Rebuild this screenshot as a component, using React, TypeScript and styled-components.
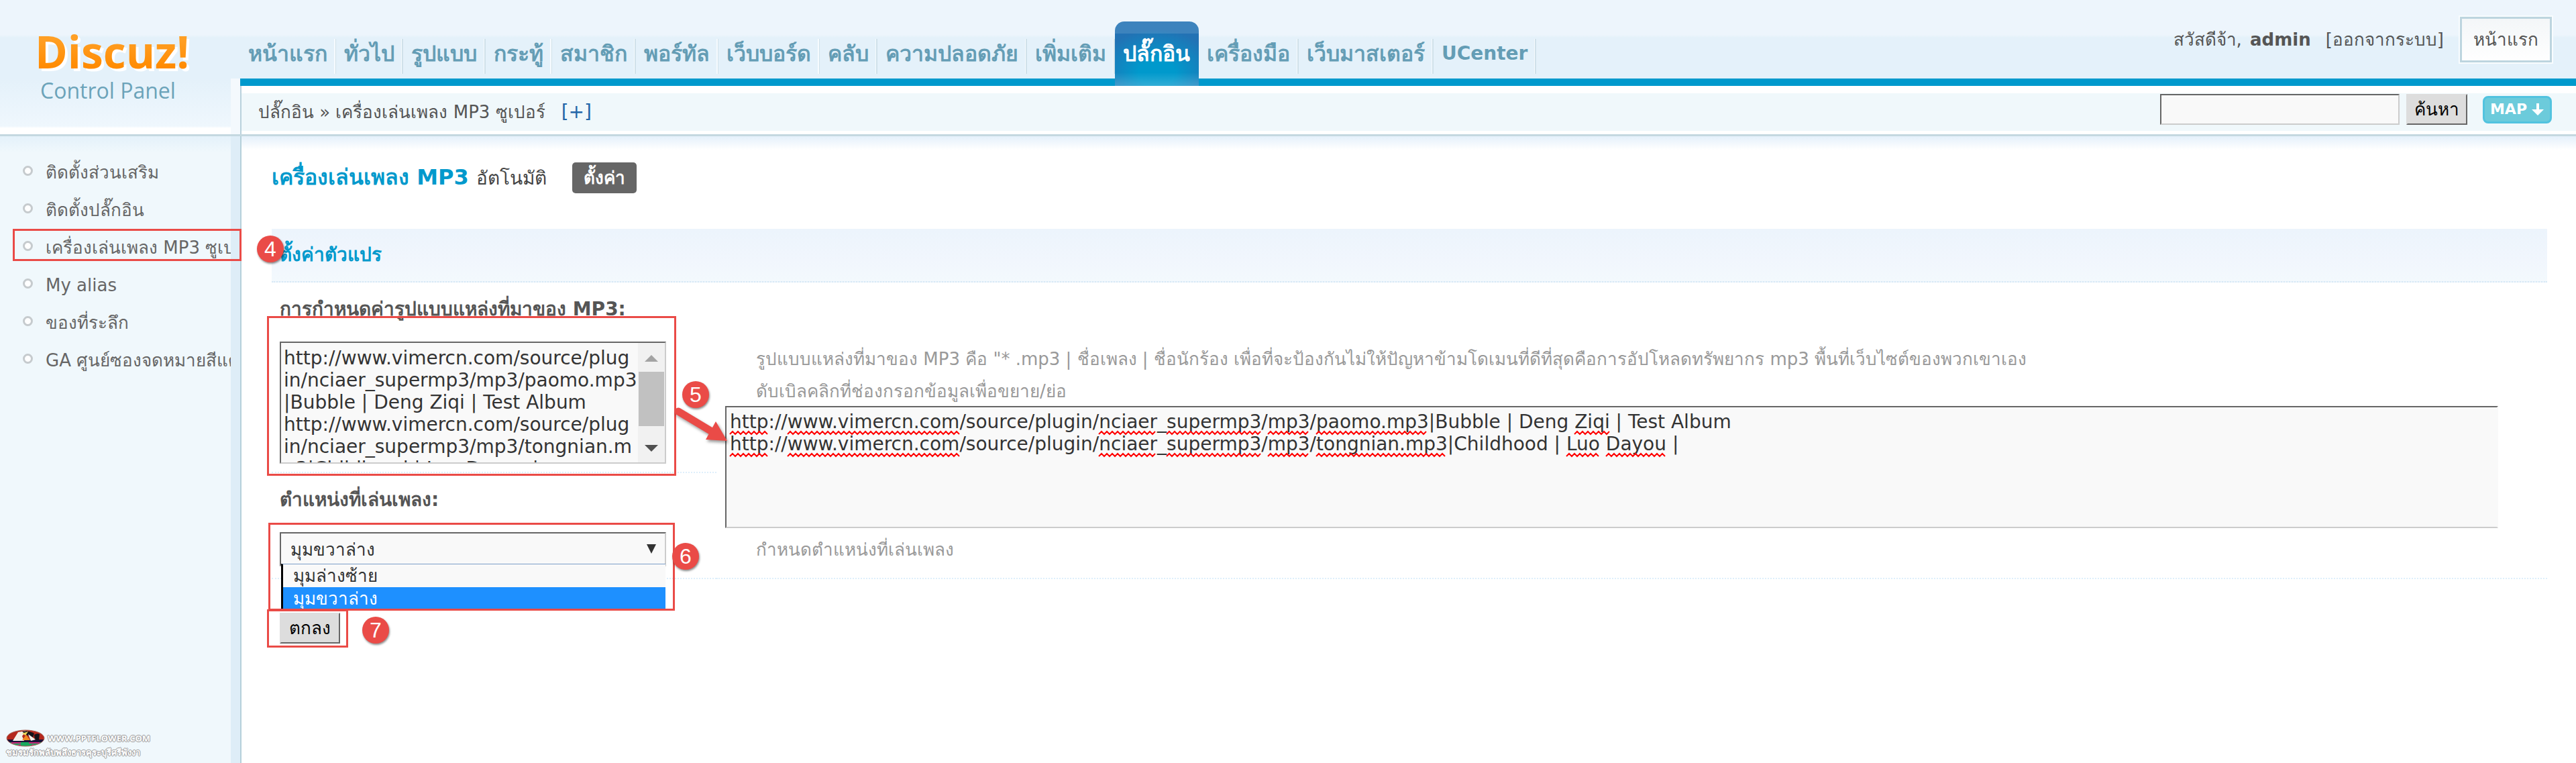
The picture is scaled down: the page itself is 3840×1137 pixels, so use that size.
import React, { useLayoutEffect, useState } from "react";
import styled, { createGlobalStyle, css } from "styled-components";

const SANS = `"DejaVu Sans", sans-serif`;
const MARK = "#ea4b47";

const GlobalStyle = createGlobalStyle`
  *, *::before, *::after { box-sizing: border-box; }
  body { margin: 0; background: #fff; color: #555; font: 26px/48px ${SANS}; }
  ul { list-style: none; margin: 0; padding: 0; }
  a { color: inherit; text-decoration: none; }
  button, input, select, textarea { font: inherit; margin: 0; border-radius: 0; }
`;

const Page = styled.div`
  min-height: 100vh;
  display: flex;
  flex-direction: column;
`;

/* ---------- header ---------- */

const Header = styled.header`
  display: grid;
  grid-template-columns: 344px 14px minmax(0, 1fr);
  background: linear-gradient(#edf5fc, #edf5fc 52px, #e4f1fa 56px);
  border-bottom: 3px solid #c4d8e0;
`;

const LogoCell = styled.div`
  padding: 32px 0 0 52px;
  background: linear-gradient(transparent 117px, #eff7fd 188px, #fff 191px);
`;

const LogoLink = styled.a`
  display: block;
  font-family: "Open Sans", sans-serif;
`;

const LogoName = styled.span`
  display: block;
  width: max-content;
  font-size: 66px;
  line-height: 88px;
  font-weight: 700;
  color: transparent;
  background: linear-gradient(#ff9f24 30%, #ff8a00 80%);
  background-clip: text;
  filter: drop-shadow(4px 4px 0 #fff);
`;

const LogoTag = styled.span`
  display: block;
  padding-left: 8px;
  font-size: 32px;
  line-height: 30px;
  color: #6ba3b9;
`;

const HeaderStrip = styled.div`
  background: linear-gradient(transparent 117px, #f4f9fd 117px);
`;

const TopBar = styled.div`
  display: flex;
  justify-content: space-between;
  height: 128px;
  background: linear-gradient(transparent 117px, #0099cc 117px);
`;

const NavList = styled.ul`
  display: flex;
  padding-top: 32px;
`;

const NavLink = styled.a<{ $active?: boolean; $latin?: boolean }>`
  display: block;
  height: 96px;
  padding: 0 13px 0 12px;
  font-size: ${(p) => (p.$latin ? 28 : 32)}px;
  line-height: 96px;
  font-weight: 700;
  color: #649db5;
  background: linear-gradient(90deg, #f6fbfe 50%, #d0e1ea 50%) right 26px / 3px 52px no-repeat;
  ${(p) =>
    p.$active &&
    css`
      color: #fff;
      border-radius: 14px 14px 0 0;
      background: linear-gradient(rgba(255, 255, 255, 0.12) 18px, transparent 18px 76px, rgba(255, 255, 255, 0.2)),
        radial-gradient(ellipse 90px 66px at 50% 78px, #0099cc 30%, #2272b4 100%);
    `}
`;

const Account = styled.div`
  display: flex;
  gap: 22px;
  padding: 23px 34px 0 0;
  line-height: 72px;
`;

const Greeting = styled.span`
  strong { margin-left: 4px; }
`;

const HomeLink = styled.a`
  height: 72px;
  padding: 3px 20px 0;
  line-height: 62px;
  border: 2px solid #f8fcfe;
  background: linear-gradient(#f3f6f8, #fff) padding-box;
  box-shadow: inset 0 0 0 3px #bdd5df;
`;

const CrumbBar = styled.div`
  display: flex;
  justify-content: space-between;
  align-items: center;
  height: 72px;
  padding: 6px 36px 0 25px;
  border-left: 2px solid #b9d1dc;
  background: linear-gradient(#fff 11px, #f0f8fb 11px 67px, #fff 67px);
`;

const MoreLink = styled.a`
  margin-left: 24px;
  font-size: 28px;
  color: #2366a8;
`;

const SearchForm = styled.form`
  display: flex;
  align-items: center;
  padding-bottom: 8px;
`;

const SearchInput = styled.input`
  width: 357px;
  height: 46px;
  padding: 0 6px;
  background: #f9f9f9;
  border: 2px solid;
  border-color: #666 #ccc #ccc #666;
`;

const PushButton = styled.button`
  height: 46px;
  padding: 0 12px;
  line-height: 42px;
  color: #000;
  background: #ddd;
  border: 2px solid;
  border-color: #ddd #666 #666 #ddd;
`;

const SearchButton = styled(PushButton)`
  margin: 0 23px 0 10px;
  padding: 0 10px;
`;

const MapButton = styled.button`
  display: flex;
  align-items: center;
  justify-content: center;
  gap: 6px;
  width: 103px;
  height: 41px;
  padding: 0;
  font-size: 22px;
  line-height: 34px;
  font-weight: 700;
  color: #fff;
  background: #6ccbdb;
  border: 3px solid #52c3df;
  border-radius: 8px;
`;

/* ---------- body ---------- */

const Body = styled.div`
  flex: 1;
  display: grid;
  grid-template-columns: 360px minmax(0, 1fr);
`;

const Sidebar = styled.aside`
  display: flex;
  flex-direction: column;
  padding-top: 26px;
  border-right: 2px solid #b5d0da;
  background: linear-gradient(90deg, transparent 344px, #deedf7 344px), linear-gradient(#e4f1fa, #f0f8fc 24px);
`;

const MenuItem = styled.li`
  position: relative;
  height: 56px;
`;

const MenuLink = styled.a`
  display: flex;
  align-items: center;
  gap: 19px;
  width: 344px;
  padding-left: 34px;
  line-height: 56px;
  white-space: nowrap;
  overflow: hidden;
  color: #666;
  &::before {
    content: "";
    flex: none;
    width: 15px;
    height: 15px;
    margin-bottom: 6px;
    border: 3px solid #c6cbce;
    border-radius: 50%;
    background: #fff;
  }
`;

const Watermark = styled.div`
  margin: auto 0 6px 9px;
  font-size: 13px;
  line-height: 18px;
  font-weight: 700;
  color: #fff;
  text-shadow: 1px 0 #999, -1px 0 #999, 0 1px #999, 0 -1px #999;
`;

const WatermarkSite = styled.div`
  display: flex;
  align-items: center;
  gap: 4px;
  font-family: "Open Sans", sans-serif;
`;

const Content = styled.main`
  padding: 38px 43px 0 45px;
  background: linear-gradient(#e4f0fb, #fff 20px);
`;

const TitleRow = styled.div`
  display: flex;
  align-items: center;
  gap: 38px;
`;

const Title = styled.h1`
  margin: 0;
  font-size: 32px;
  line-height: 46px;
  color: #0099cc;
  small {
    font-size: 28px;
    font-weight: 400;
    color: #444;
  }
`;

const SettingsTab = styled.button`
  height: 46px;
  padding: 0 17px;
  line-height: 46px;
  font-weight: 700;
  color: #fff;
  background: #666;
  border: 0;
  border-radius: 5px;
`;

const SectionTitle = styled.h2`
  position: relative;
  margin: 52px 0 0;
  padding-left: 12px;
  font-size: 28px;
  line-height: 78px;
  color: #0099cc;
  background: linear-gradient(#ecf4fc, #f1f6fd 60%, #f3f9fd);
  border-bottom: 2px dotted #d6e8f5;
`;

const SettingRow = styled.div`
  position: relative;
  display: grid;
  grid-template-columns: 663px minmax(0, 1fr);
`;

const Dotted = css`
  border-bottom: 2px dotted #deeffb;
`;

const FieldCell = styled.div<{ $bottom: number }>`
  padding: 0 0 ${(p) => p.$bottom}px 12px;
  ${Dotted}
`;

const TipCell = styled.div<{ $lined?: boolean }>`
  padding: 90px 0 0 59px;
  color: #999;
  ${(p) => p.$lined && Dotted}
  p { margin: 0; }
`;

const FieldLabel = styled.label`
  display: block;
  margin-bottom: 8px;
  font-size: 28px;
  line-height: 80px;
  font-weight: 700;
  color: #555;
`;

const Inset = css`
  background: #f9f9f9;
  border: 2px solid;
  border-color: #666 #ccc #ccc #666;
`;

const SourceBox = styled.div`
  display: flex;
  width: 576px;
  height: 182px;
  ${Inset}
`;

const SourceArea = styled.textarea`
  flex: 1;
  min-width: 0;
  padding: 6px 0 0 4px;
  font-size: 28px;
  line-height: 33px;
  color: #333;
  background: transparent;
  border: 0;
  outline: 0;
  resize: none;
  overflow: hidden;
  white-space: pre;
`;

const WideBox = styled.div`
  position: absolute;
  top: 184px;
  left: 676px;
  right: 73px;
  height: 182px;
  display: flex;
  ${Inset}
  border-right-color: #f9f9f9;
`;

const WideArea = styled(SourceArea)`
  padding: 5px 0 0 5px;
`;

const Squiggles = styled.svg`
  position: absolute;
  inset: 0;
  width: 100%;
  height: 100%;
  pointer-events: none;
`;

const ScrollTrack = styled.svg`
  flex: none;
  width: 40px;
  height: 178px;
`;

const SelectBox = styled.div`
  position: relative;
  width: 576px;
`;

const Select = styled.select`
  display: block;
  appearance: none;
  width: 100%;
  height: 51px;
  padding: 0 14px;
  color: #333;
  ${Inset}
`;

const SelectArrow = styled.svg`
  position: absolute;
  top: 18px;
  right: 15px;
  pointer-events: none;
`;

const OptionList = styled.ul`
  position: absolute;
  z-index: 1;
  top: 47px;
  left: 2px;
  right: 1px;
  border-top: 1px solid #7c9dc8;
  border-left: 3px solid #000;
`;

const OptionRow = styled.li<{ $active?: boolean }>`
  padding-left: 15px;
  line-height: 34px;
  color: ${(p) => (p.$active ? "#fff" : "#333")};
  background: ${(p) => (p.$active ? "#1e90ff" : "#f9f9f9")};
`;

const SubmitRow = styled.div`
  position: relative;
  display: flex;
  padding: 50px 12px;
`;

/* ---------- tutorial marks ---------- */

type Box = { $x: number; $y: number };

const MarkFrame = styled.span<Box & { $w: number; $h: number }>`
  position: absolute;
  z-index: 2;
  left: ${(p) => p.$x}px;
  top: ${(p) => p.$y}px;
  width: ${(p) => p.$w}px;
  height: ${(p) => p.$h}px;
  border: 3px solid ${MARK};
  pointer-events: none;
`;

const MarkDot = styled.span<Box>`
  position: absolute;
  z-index: 3;
  left: ${(p) => p.$x}px;
  top: ${(p) => p.$y}px;
  width: 40px;
  height: 40px;
  border-radius: 50%;
  background: ${MARK};
  box-shadow: 1px 2px 3px rgba(0, 0, 0, 0.45);
  color: #fff;
  font: 32px/40px "Liberation Sans", Arial, sans-serif;
  text-align: center;
`;

const MarkArrow = styled.svg`
  position: absolute;
  z-index: 2;
  top: 178px;
  left: 590px;
  filter: drop-shadow(2px 3px 2px rgba(0, 0, 0, 0.4));
  pointer-events: none;
`;

/* ---------- data ---------- */

const NAV = [
  "หน้าแรก", "ทั่วไป", "รูปแบบ", "กระทู้", "สมาชิก", "พอร์ทัล", "เว็บบอร์ด", "คลับ",
  "ความปลอดภัย", "เพิ่มเติม", "ปลั๊กอิน", "เครื่องมือ", "เว็บมาสเตอร์", "UCenter",
];

const MENU = [
  "ติดตั้งส่วนเสริม",
  "ติดตั้งปลั๊กอิน",
  "เครื่องเล่นเพลง MP3 ซูเปอร์",
  "My alias",
  "ของที่ระลึก",
  "GA ศูนย์ซองจดหมายสีแดง",
];

const SOURCE_LINES = [
  "http://www.vimercn.com/source/plugin/nciaer_supermp3/mp3/paomo.mp3|Bubble | Deng Ziqi | Test Album",
  "http://www.vimercn.com/source/plugin/nciaer_supermp3/mp3/tongnian.mp3|Childhood | Luo Dayou |",
];

/* The collapsed field shows the same list broken to its narrow width. */
const NARROW_LINES = [
  "http://www.vimercn.com/source/plug",
  "in/nciaer_supermp3/mp3/paomo.mp3",
  "|Bubble | Deng Ziqi | Test Album",
  "http://www.vimercn.com/source/plug",
  "in/nciaer_supermp3/mp3/tongnian.m",
  "p3|Childhood | Luo Dayou |",
];

const MISSPELT = ["http", "www.vimercn.com", "nciaer", "supermp3", "/mp3/", "paomo.mp3", "tongnian.mp3", "Ziqi", "Luo", "Dayou"];

const POSITIONS = ["มุมล่างซ้าย", "มุมขวาล่าง"];

function SpellMarks() {
  const [paths, setPaths] = useState<string[]>([]);
  useLayoutEffect(() => {
    const ctx = document.createElement("canvas").getContext("2d");
    if (!ctx) return;
    ctx.font = `28px ${SANS}`;
    const found: string[] = [];
    SOURCE_LINES.forEach((line, row) => {
      MISSPELT.forEach((entry) => {
        const word = entry.replace(/\//g, "");
        const at = line.indexOf(entry) + entry.indexOf(word);
        if (line.indexOf(entry) < 0) return;
        const start = 5 + ctx.measureText(line.slice(0, at)).width;
        const end = start + ctx.measureText(word).width;
        const y = 38 + row * 33;
        let d = `M${Math.round(start)} ${y + 2}`;
        let up = true;
        for (let x = Math.round(start) + 4; x < end; x += 4) {
          d += ` L${x} ${up ? y - 2 : y + 2}`;
          up = !up;
        }
        found.push(d);
      });
    });
    setPaths(found);
  }, []);
  return (
    <Squiggles aria-hidden="true">
      {paths.map((d) => (
        <path key={d} d={d} fill="none" stroke="#f00" strokeWidth="2" />
      ))}
    </Squiggles>
  );
}

function Emblem() {
  return (
    <svg width="58" height="26" viewBox="0 0 58 26" aria-hidden="true">
      <clipPath id="oval"><ellipse cx="29" cy="13" rx="28" ry="12" /></clipPath>
      <g clipPath="url(#oval)">
        <rect width="58" height="26" fill="#b5281c" />
        <rect y="15" width="58" height="4" fill="#1b1038" />
        <rect y="19" width="58" height="7" fill="#17a85c" />
        <path d="M10 17 L18 4 L30 2 L24 10 L27 17 Z" fill="#f4f1ea" />
        <path d="M24 3 Q34 1 42 6 L40 12 L30 8 Z" fill="#15151c" />
        <path d="M42 8 Q46 5 50 7 L49 16 L43 16 Z" fill="#15151c" />
        <path d="M24 6 L33 3 L29 9 Z" fill="#e9d45a" />
        <path d="M24 16 L30 8 L36 16 Z" fill="#f08a24" />
        <path d="M33 7 L44 15 L37 17 Z" fill="#f4f1ea" />
        <path d="M8 20 H22 M34 20 H50" stroke="#c9277c" strokeWidth="2" />
        <path d="M18 24 H22 M38 24 H42" stroke="#c9277c" strokeWidth="3" />
      </g>
      <ellipse cx="29" cy="13" rx="28" ry="12" fill="none" stroke="#a86a60" />
    </svg>
  );
}

export default function App() {
  const [wide, setWide] = useState(SOURCE_LINES.join("\n"));
  const [narrow, setNarrow] = useState(NARROW_LINES.join("\n"));
  const [position, setPosition] = useState(POSITIONS[1]);

  return (
    <Page>
      <GlobalStyle />
      <Header>
        <LogoCell>
          <LogoLink href="#home">
            <LogoName>Discuz!</LogoName>
            <LogoTag>Control Panel</LogoTag>
          </LogoLink>
        </LogoCell>
        <HeaderStrip />
        <div>
          <TopBar>
            <nav>
              <NavList>
                {NAV.map((name) => (
                  <li key={name}>
                    <NavLink href="#nav" $active={name === "ปลั๊กอิน"} $latin={name === "UCenter"}>{name}</NavLink>
                  </li>
                ))}
              </NavList>
            </nav>
            <Account>
              <Greeting>สวัสดีจ้า, <strong>admin</strong></Greeting>
              <a href="#logout">[ออกจากระบบ]</a>
              <HomeLink href="#site">หน้าแรก</HomeLink>
            </Account>
          </TopBar>
          <CrumbBar>
            <div>
              ปลั๊กอิน » เครื่องเล่นเพลง MP3 ซูเปอร์
              <MoreLink href="#add">[+]</MoreLink>
            </div>
            <SearchForm onSubmit={(e) => e.preventDefault()}>
              <SearchInput type="text" aria-label="ค้นหา" />
              <SearchButton type="submit">ค้นหา</SearchButton>
              <MapButton type="button">
                MAP
                <svg width="20" height="20" viewBox="0 0 20 20" aria-hidden="true">
                  <path d="M8 1 H12 V10 H19 L10 19 L1 10 H8 Z" fill="#fff" />
                </svg>
              </MapButton>
            </SearchForm>
          </CrumbBar>
        </div>
      </Header>

      <Body>
        <Sidebar>
          <ul>
            {MENU.map((name, i) => (
              <MenuItem key={name}>
                <MenuLink href="#menu">{name}</MenuLink>
                {i === 2 && <MarkFrame $x={19} $y={0} $w={341} $h={48} />}
              </MenuItem>
            ))}
          </ul>
          <Watermark>
            <WatermarkSite><Emblem />WWW.PPTFLOWER.COM</WatermarkSite>
            ชมรมรักพลับพลึงธารคุระบุรีศรีพังงา
          </Watermark>
        </Sidebar>

        <Content>
          <TitleRow>
            <Title>เครื่องเล่นเพลง MP3 <small>อัตโนมัติ</small></Title>
            <SettingsTab type="button">ตั้งค่า</SettingsTab>
          </TitleRow>

          <SectionTitle>
            ตั้งค่าตัวแปร
            <MarkDot $x={-22} $y={10}>4</MarkDot>
          </SectionTitle>

          <form onSubmit={(e) => e.preventDefault()}>
            <SettingRow>
              <FieldCell $bottom={12}>
                <FieldLabel htmlFor="source">การกำหนดค่ารูปแบบแหล่งที่มาของ MP3:</FieldLabel>
                <SourceBox>
                  <SourceArea id="source" spellCheck={false} value={narrow} onChange={(e) => setNarrow(e.target.value)} />
                  <ScrollTrack viewBox="0 0 40 178" aria-hidden="true">
                    <rect width="40" height="178" fill="#f1f1f1" />
                    <path d="M10 28 L20 18 L30 28 Z" fill="#a3a3a3" />
                    <rect x="1" y="43" width="38" height="81" fill="#c1c1c1" />
                    <path d="M10 152 L20 162 L30 152 Z" fill="#505050" />
                  </ScrollTrack>
                </SourceBox>
              </FieldCell>
              <TipCell>
                <p>รูปแบบแหล่งที่มาของ MP3 คือ "* .mp3 | ชื่อเพลง | ชื่อนักร้อง เพื่อที่จะป้องกันไม่ให้ปัญหาข้ามโดเมนที่ดีที่สุดคือการอัปโหลดทรัพยากร mp3 พื้นที่เว็บไซต์ของพวกเขาเอง</p>
                <p>ดับเบิลคลิกที่ช่องกรอกข้อมูลเพื่อขยาย/ย่อ</p>
              </TipCell>
              <WideBox>
                <WideArea aria-label="MP3" spellCheck={false} value={wide} onChange={(e) => setWide(e.target.value)} />
                <SpellMarks />
              </WideBox>
              <MarkFrame $x={-7} $y={50} $w={610} $h={238} />
              <MarkDot $x={612} $y={147}>5</MarkDot>
              <MarkArrow width="100" height="70" viewBox="0 0 100 70" aria-hidden="true">
                <path d="M16 14 L66 44" stroke={MARK} strokeWidth="11" strokeLinecap="round" />
                <path d="M89 58 L72 29 L57 56 Z" fill={MARK} />
              </MarkArrow>
            </SettingRow>

            <SettingRow>
              <FieldCell $bottom={17}>
                <FieldLabel htmlFor="position">ตำแหน่งที่เล่นเพลง:</FieldLabel>
                <SelectBox>
                  <Select id="position" value={position} onChange={(e) => setPosition(e.target.value)}>
                    {POSITIONS.map((name) => <option key={name}>{name}</option>)}
                  </Select>
                  <SelectArrow width="14" height="14" viewBox="0 0 14 14" aria-hidden="true">
                    <path d="M0 0 H14 L7 14 Z" fill="#333" />
                  </SelectArrow>
                  <OptionList>
                    {POSITIONS.map((name) => (
                      <OptionRow key={name} $active={name === position} onClick={() => setPosition(name)}>{name}</OptionRow>
                    ))}
                  </OptionList>
                </SelectBox>
              </FieldCell>
              <TipCell $lined>
                <p>กำหนดตำแหน่งที่เล่นเพลง</p>
              </TipCell>
              <MarkFrame $x={-5} $y={74} $w={606} $h={131} />
              <MarkDot $x={597} $y={104}>6</MarkDot>
            </SettingRow>

            <SubmitRow>
              <PushButton type="submit">ตกลง</PushButton>
              <MarkFrame $x={-7} $y={45} $w={121} $h={57} />
              <MarkDot $x={135} $y={56}>7</MarkDot>
            </SubmitRow>
          </form>
        </Content>
      </Body>
    </Page>
  );
}
